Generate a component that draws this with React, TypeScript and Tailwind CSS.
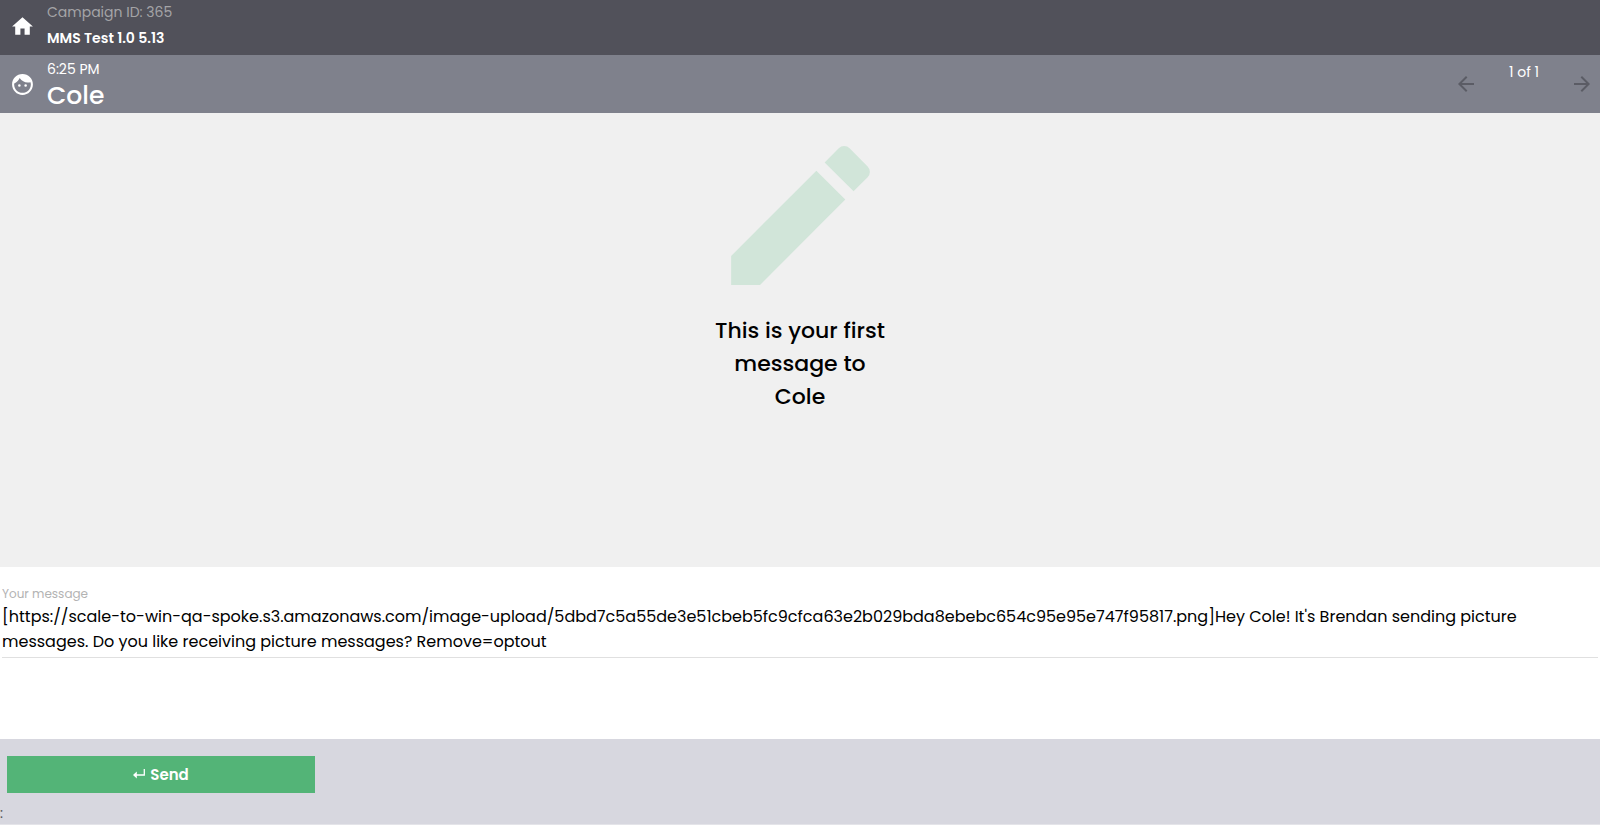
import { useState } from "react";
import { MdArrowBack, MdArrowForward, MdEdit, MdFace, MdHome } from "react-icons/md";

const INITIAL_MESSAGE =
  "[https://scale-to-win-qa-spoke.s3.amazonaws.com/image-upload/5dbd7c5a55de3e51cbeb5fc9cfca63e2b029bda8ebebc654c95e95e747f95817.png]Hey Cole! It's Brendan sending picture messages. Do you like receiving picture messages? Remove=optout";

function ReturnIcon() {
  return (
    <svg viewBox="0 0 12 12" className="h-3 w-3" fill="none" stroke="currentColor" aria-hidden="true">
      <path d="M11.3 0v6H3" strokeWidth="1.3" />
      <path d="M0 6l3.8-3.4v6.8z" fill="currentColor" stroke="none" />
    </svg>
  );
}

export default function App() {
  const [message, setMessage] = useState(INITIAL_MESSAGE);

  return (
    <div className="flex min-h-screen flex-col bg-[#f0f0f0] font-[Poppins,Inter,sans-serif] text-black">
      {/* Campaign bar */}
      <header className="flex h-[55px] items-start gap-3 bg-[#51515a] pl-[10px]">
        <button type="button" aria-label="Home" className="pt-[14px] text-white">
          <MdHome size={25} />
        </button>
        <div className="text-sm leading-[26px]">
          <p className="-mt-px text-[#a4a4a7]">Campaign ID: 365</p>
          <h1 className="font-semibold text-white">MMS Test 1.0 5.13</h1>
        </div>
      </header>

      {/* Contact bar */}
      <div className="flex h-[58px] items-center gap-3 bg-[#7f818c] pr-[6px] pl-[10px] text-white">
        <MdFace size={25} />
        <div className="flex-1">
          <p className="text-sm leading-6">6:25 PM</p>
          <h2 className="text-[25px] leading-[30px] font-medium">Cole</h2>
        </div>
        <nav className="flex h-full items-center" aria-label="Contacts">
          <button type="button" aria-label="Previous contact" className="text-[#5b5c65]">
            <MdArrowBack size={24} />
          </button>
          <p className="w-[92px] self-start pt-[7px] text-center text-sm leading-5">1 of 1</p>
          <button type="button" aria-label="Next contact" className="text-[#5b5c65]">
            <MdArrowForward size={24} />
          </button>
        </nav>
      </div>

      {/* Empty conversation */}
      <main className="flex flex-1 flex-col items-center pt-[10px]">
        <MdEdit size={185} className="text-[#d1e5d9]" />
        <p className="mt-[6px] w-[180px] text-center text-[22px] leading-[33px] font-medium">
          This is your first message to Cole
        </p>
      </main>

      {/* Message editor */}
      <section className="h-[172px] bg-white px-[2px] pt-[18px]">
        <label htmlFor="message" className="block text-xs leading-[18px] text-[#b3b3b3]">
          Your message
        </label>
        <textarea
          id="message"
          rows={2}
          value={message}
          onChange={(e) => setMessage(e.target.value)}
          className="block w-full resize-none overflow-hidden border-b border-[#e0e0e0] pt-px pb-[3px] text-base leading-[25px] outline-none"
        />
      </section>

      <footer className="h-[86px] border-b border-[#e4e4e9] bg-[#d7d7df] pt-[17px]">
        <button
          type="button"
          className="ml-[7px] flex h-[37px] w-[308px] items-center justify-center gap-[5px] bg-[#53b477] pt-px text-[15px] font-semibold text-white"
        >
          <ReturnIcon />
          Send
        </button>
        <p className="mt-[10px] text-sm leading-5 text-[#555]">:</p>
      </footer>
    </div>
  );
}
